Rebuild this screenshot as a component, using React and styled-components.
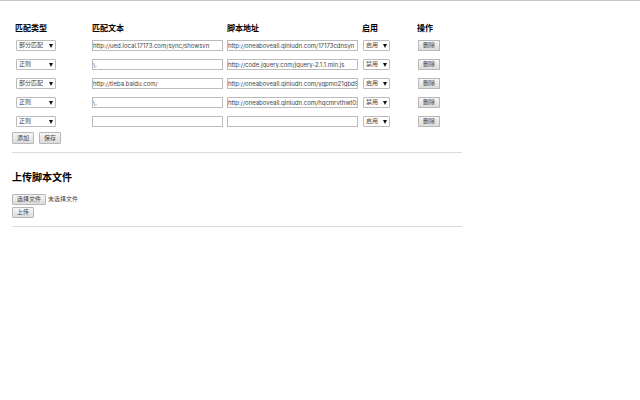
// Libs
import React, { useState } from 'react';
import styled, { createGlobalStyle } from 'styled-components';

const GlobalStyle = createGlobalStyle`
  body {
    margin: 0;
    border-top: 1px solid #c8c8c8;
    background: #fff;
    color: #000;
    font-family: 'Liberation Sans', 'Noto Sans CJK SC', sans-serif;
    font-size: 6px;
  }
  button, input, select {
    box-sizing: border-box;
    margin: 0;
    font-family: inherit;
  }
`;

// Styled Components
const Page = styled.main`
  max-width: 450px;
  padding: 21px 12px;
`;

const RulesTable = styled.table`
  width: 100%;
  table-layout: fixed;
  border-collapse: collapse;
`;

const HeadCell = styled.th`
  box-sizing: border-box;
  width: ${props => props.$width};
  height: 14px;
  padding: 0 1px 0 3px;
  font-size: 8px;
  font-weight: 600;
  line-height: 14px;
  text-align: left;
`;

const Cell = styled.td`
  height: 19px;
  padding: 0 1px 0 ${props => (props.$inset ? '4px' : '3px')};
  line-height: 0;
  vertical-align: middle;
`;

const TextInput = styled.input`
  width: 100%;
  height: 11px;
  padding: 0;
  border: 1px solid #bcbcbc;
  background: #fff;
  color: #444;
  font-family: Inter, 'Noto Sans CJK SC', sans-serif;
  font-size: 6px;
  line-height: 9px;
`;

const SelectBox = styled.span`
  display: inline-grid;
  align-items: center;
  width: ${props => props.$width};
  & > * {
    grid-area: 1 / 1;
  }
`;

const SelectControl = styled.select`
  width: 100%;
  height: 11px;
  padding: 0 2px;
  border: 1px solid #bcbcbc;
  border-radius: 1px;
  background: #fff;
  color: #444;
  font-size: 6px;
  line-height: 9px;
  appearance: none;
`;

const Arrow = styled.svg`
  justify-self: end;
  width: 4px;
  height: 4px;
  margin-right: 3px;
  pointer-events: none;
`;

const Button = styled.button`
  display: inline-block;
  box-sizing: border-box;
  min-height: 11px;
  padding: 0 4px;
  border: 1px solid #b8b8b8;
  border-radius: ${props => (props.$square ? '0' : '1px')};
  background: linear-gradient(#f6f6f6, #dcdcdc);
  color: #444;
  font-size: 6px;
  line-height: 9px;
  white-space: nowrap;
`;

const Actions = styled.div`
  display: flex;
  gap: 5px;
  height: 12px;
  margin-top: 1px;
`;

const Divider = styled.hr`
  height: 1px;
  margin: 8px 0 0;
  border: 0;
  background: #dadada;
`;

const Title = styled.h2`
  margin: 18px 0 9px;
  font-size: 10px;
  font-weight: 600;
  line-height: 14px;
`;

const UploadForm = styled.form`
  display: flex;
  flex-direction: column;
  align-items: flex-start;
  gap: 2px;
`;

const FileRow = styled.div`
  position: relative;
  display: flex;
  align-items: center;
  gap: 2px;
  color: #444;
  line-height: 9px;
`;

const FileInput = styled.input`
  position: absolute;
  width: 1px;
  height: 1px;
  opacity: 0;
`;

const initialRules = [
    { id: 1, type: 'part', text: 'http://ued.local.17173.com/sync/showsvn', url: 'http://oneaboveall.qiniudn.com/17173cdnsyn', state: 'on' },
    { id: 2, type: 'regex', text: '\\.', url: 'http://code.jquery.com/jquery-2.1.1.min.js', state: 'off' },
    { id: 3, type: 'part', text: 'http://tieba.baidu.com/', url: 'http://oneaboveall.qiniudn.com/ygpmo21gbd9', state: 'on' },
    { id: 4, type: 'regex', text: '\\.', url: 'http://oneaboveall.qiniudn.com/hqcmrvthwt0x', state: 'off' },
    { id: 5, type: 'regex', text: '', url: '', state: 'on' },
];

const Select = ({ width, label, options, value, onChange }) => (
    <SelectBox $width={width}>
        <SelectControl aria-label={label} value={value} onChange={e => onChange(e.target.value)}>
            {Object.keys(options).map(key => (
                <option key={key} value={key}>{options[key]}</option>
            ))}
        </SelectControl>
        <Arrow viewBox="0 0 4 4" aria-hidden="true">
            <path d="M0 0h4L2 4z" fill="#111" />
        </Arrow>
    </SelectBox>
);

const RuleRow = ({ rule, update, remove }) => (
    <tr>
        <Cell $inset>
            <Select
                width="40px"
                label="匹配类型"
                options={{ part: '部分匹配', regex: '正则' }}
                value={rule.type}
                onChange={type => update(rule.id, { type })}
            />
        </Cell>
        <Cell>
            <TextInput aria-label="匹配文本" value={rule.text} onChange={e => update(rule.id, { text: e.target.value })} />
        </Cell>
        <Cell>
            <TextInput aria-label="脚本地址" value={rule.url} onChange={e => update(rule.id, { url: e.target.value })} />
        </Cell>
        <Cell $inset>
            <Select
                width="27px"
                label="启用"
                options={{ on: '启用', off: '禁用' }}
                value={rule.state}
                onChange={state => update(rule.id, { state })}
            />
        </Cell>
        <Cell $inset>
            <Button type="button" $square onClick={() => remove(rule.id)}>删除</Button>
        </Cell>
    </tr>
);

// Component
const App = () => {
    const [rules, setRules] = useState(initialRules);
    const [fileName, setFileName] = useState('');

    const update = (id, patch) => setRules(rules.map(rule => (rule.id === id ? { ...rule, ...patch } : rule)));
    const remove = id => setRules(rules.filter(rule => rule.id !== id));
    const add = () => setRules([...rules, { id: Date.now(), type: 'regex', text: '', url: '', state: 'on' }]);

    return (
        <>
            <GlobalStyle />
            <Page lang="zh-CN">
                <RulesTable>
                    <thead>
                        <tr>
                            <HeadCell $width="77px">匹配类型</HeadCell>
                            <HeadCell $width="30%">匹配文本</HeadCell>
                            <HeadCell $width="30%">脚本地址</HeadCell>
                            <HeadCell $width="55px">启用</HeadCell>
                            <HeadCell>操作</HeadCell>
                        </tr>
                    </thead>
                    <tbody>
                        {rules.map(rule => (
                            <RuleRow key={rule.id} rule={rule} update={update} remove={remove} />
                        ))}
                    </tbody>
                </RulesTable>
                <Actions>
                    <Button type="button" onClick={add}>添加</Button>
                    <Button type="button">保存</Button>
                </Actions>
                <Divider />
                <Title>上传脚本文件</Title>
                <UploadForm onSubmit={e => e.preventDefault()}>
                    <FileRow>
                        <FileInput
                            id="script-file"
                            type="file"
                            onChange={e => setFileName(e.target.files.length ? e.target.files[0].name : '')}
                        />
                        <Button as="label" htmlFor="script-file">选择文件</Button>
                        <span>{fileName || '未选择文件'}</span>
                    </FileRow>
                    <Button type="submit">上传</Button>
                </UploadForm>
                <Divider />
            </Page>
        </>
    );
};

export default App;
